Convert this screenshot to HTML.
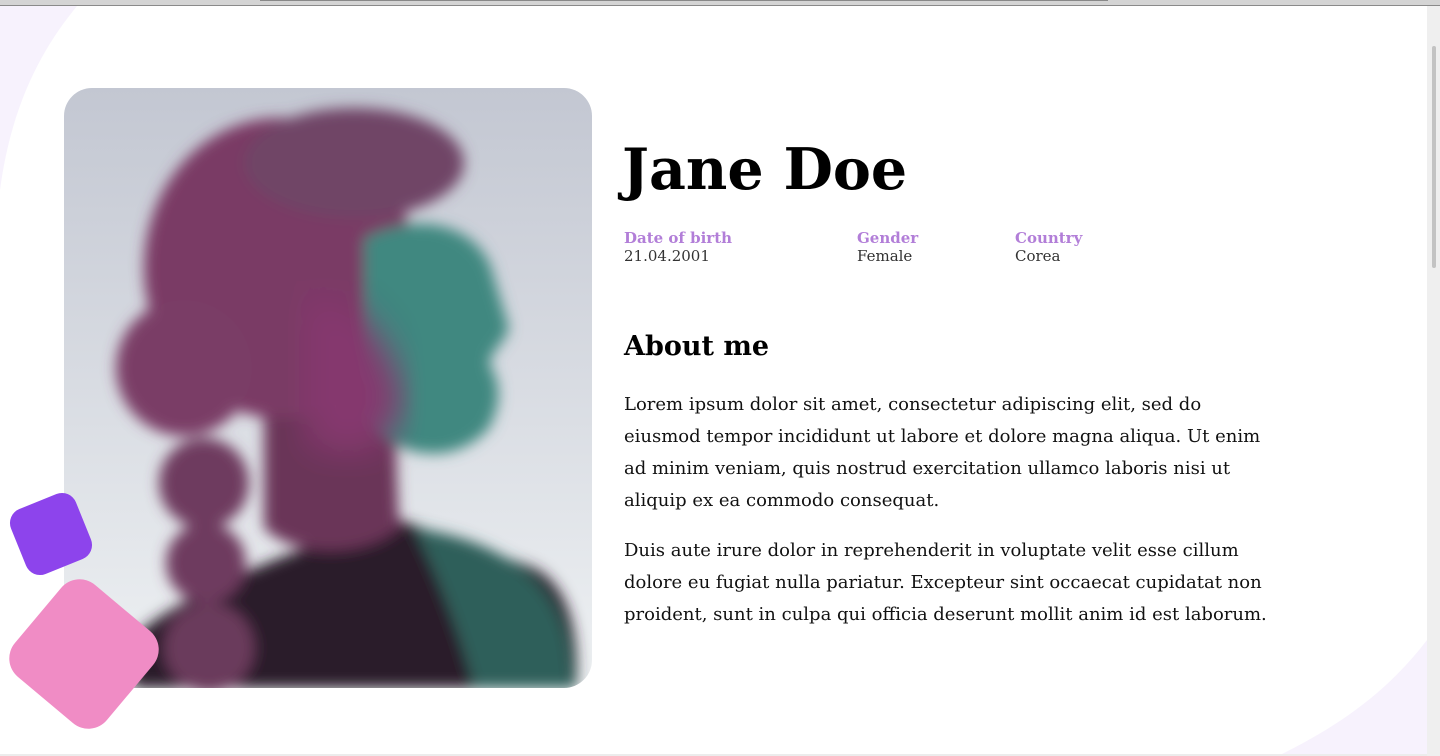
<!DOCTYPE html>
<html><head><meta charset="utf-8"><style>
html,body{margin:0;padding:0;}
body{width:1440px;height:756px;overflow:hidden;position:relative;background:#fff;font-family:"DejaVu Serif","Liberation Serif",serif;}
.topbar{position:absolute;left:0;top:0;width:1440px;height:5px;background:#d4d4d4;border-bottom:1px solid #8a8a8a;}
.topthumb{position:absolute;left:260px;top:0;width:848px;height:1px;background:#888;}
.sb{position:absolute;right:0;top:6px;width:13px;height:750px;background:#efefef;}
.thumb{position:absolute;left:5px;top:40px;width:4px;height:222px;background:#c3c3c3;border-radius:2px;}
.bot{position:absolute;left:0;top:754px;width:1427px;height:2px;background:#ececec;}
.photo{position:absolute;left:64px;top:88px;width:528px;height:600px;border-radius:28px;overflow:hidden;}
h1{position:absolute;left:622px;top:130px;margin:0;font-size:57px;font-weight:bold;color:#000;line-height:80px;}
.lab{position:absolute;top:229px;font-size:15px;line-height:18px;}
.lab b{color:#b27ed8;display:block;}
.lab span{color:#333;display:block;}
h2{position:absolute;left:624px;top:329px;margin:0;font-size:27px;line-height:36px;font-weight:bold;}
.p{position:absolute;left:624px;font-size:18px;line-height:32px;color:#111;white-space:nowrap;}
</style></head><body>
<svg style="position:absolute;left:0;top:0" width="1440" height="756">
<path d="M0 6 L77 6 C45 45 12 100 0 190 Z" fill="#f7f2fd"/>
<path d="M1427 640 C1385 695 1335 728 1278 756 L1427 756 Z" fill="#f7f2fd"/>
</svg>
<div class="topbar"><div class="topthumb"></div></div>
<div class="sb"><div class="thumb"></div></div>
<div class="bot"></div>
<div class="photo">
<svg width="528" height="600" viewBox="0 0 528 600">
<defs>
<linearGradient id="bg" x1="0" y1="0" x2="0" y2="1"><stop offset="0" stop-color="#c3c7d2"/><stop offset="1" stop-color="#eef1f3"/></linearGradient>
<filter id="b"><feGaussianBlur stdDeviation="7"/></filter>
<filter id="b2"><feGaussianBlur stdDeviation="16"/></filter>
</defs>
<rect width="528" height="600" fill="url(#bg)"/>
<g filter="url(#b)">
<path d="M70 600 L60 560 C90 520 200 470 330 430 L470 480 C510 500 515 560 512 600 Z" fill="#2c1f2c"/>
<path d="M350 440 C420 450 490 480 505 560 L510 600 L410 600 C395 540 370 480 350 440 Z" fill="#2f5f5a"/>
<path d="M200 320 L330 320 L335 440 C300 470 230 470 200 440 Z" fill="#6a3558"/>
<ellipse cx="215" cy="180" rx="135" ry="150" fill="#7a3a65"/>
<ellipse cx="290" cy="75" rx="110" ry="55" fill="#6f4566"/>
<path d="M300 150 C360 120 420 140 430 190 L445 240 C440 255 430 260 425 275 C440 300 435 320 425 340 C390 380 330 370 300 330 Z" fill="#3f8880"/>
<path d="M240 210 C290 200 330 260 340 310 C330 370 280 380 240 350 Z" fill="#85396e" filter="url(#b2)"/>
<circle cx="120" cy="280" r="68" fill="#7a3c66"/>
<circle cx="140" cy="395" r="45" fill="#6e3a5e"/>
<circle cx="142" cy="475" r="40" fill="#6e3a5e"/>
<circle cx="145" cy="560" r="45" fill="#6a3a5c"/>
</g>
</svg>
</div>
<svg style="position:absolute;left:0;top:480px" width="200" height="276">
<rect x="16" y="19" width="70" height="70" rx="15" fill="#8d44ec" transform="rotate(-22 51 54)"/>
<rect x="24" y="114" width="120" height="120" rx="24" fill="#f08cc5" transform="rotate(40 84 174)"/>
</svg>
<h1>Jane Doe</h1>
<div class="lab" style="left:624px"><b>Date of birth</b><span>21.04.2001</span></div>
<div class="lab" style="left:857px"><b>Gender</b><span>Female</span></div>
<div class="lab" style="left:1015px"><b>Country</b><span>Corea</span></div>
<h2>About me</h2>
<div class="p" style="top:389px">Lorem ipsum dolor sit amet, consectetur adipiscing elit, sed do<br>eiusmod tempor incididunt ut labore et dolore magna aliqua. Ut enim<br>ad minim veniam, quis nostrud exercitation ullamco laboris nisi ut<br>aliquip ex ea commodo consequat.</div>
<div class="p" style="top:535px">Duis aute irure dolor in reprehenderit in voluptate velit esse cillum<br>dolore eu fugiat nulla pariatur. Excepteur sint occaecat cupidatat non<br>proident, sunt in culpa qui officia deserunt mollit anim id est laborum.</div>
</body></html>
